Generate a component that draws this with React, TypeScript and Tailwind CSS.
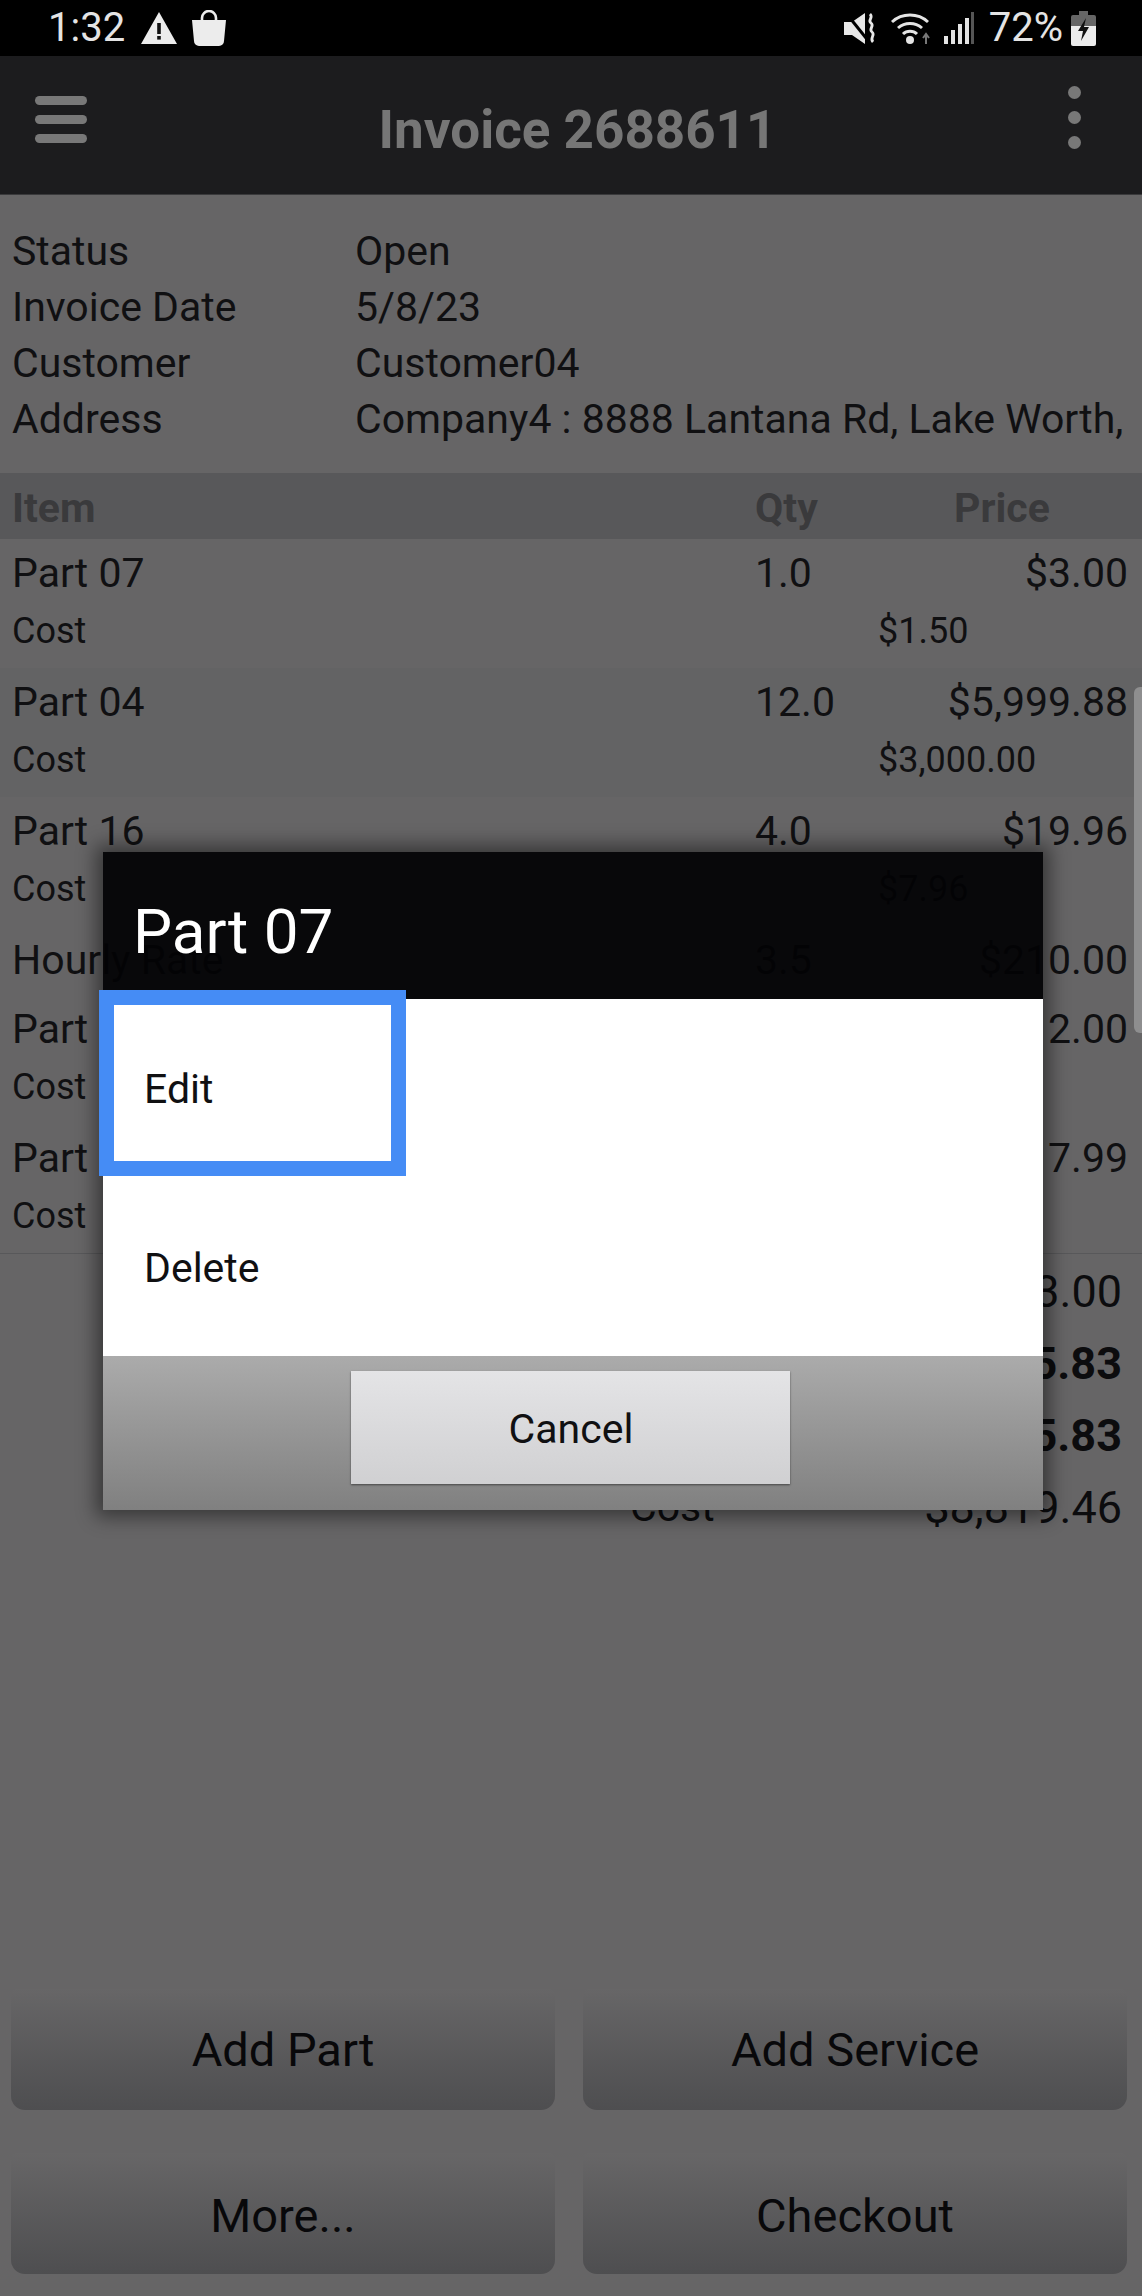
import React from 'react';

type Item = { name: string; qty: string; price: string; cost?: string };

const items: Item[] = [
  { name: 'Part 07', qty: '1.0', price: '$3.00', cost: '$1.50' },
  { name: 'Part 04', qty: '12.0', price: '$5,999.88', cost: '$3,000.00' },
  { name: 'Part 16', qty: '4.0', price: '$19.96', cost: '$7.96' },
  { name: 'Hourly Rate', qty: '3.5', price: '$210.00' },
  { name: 'Part 11', qty: '1.0', price: '$12.00', cost: '$1.00' },
  { name: 'Part 02', qty: '1.0', price: '$17.99', cost: '$3.50' },
];

const info = [
  ['Status', 'Open'],
  ['Invoice Date', '5/8/23'],
  ['Customer', 'Customer04'],
  ['Address', 'Company4 : 8888 Lantana Rd, Lake Worth,'],
];

const totals = [
  { label: 'Subtotal', value: '$6,243.00', bold: false },
  { label: 'Tax', value: '$6,245.83', bold: true },
  { label: 'Total', value: '$6,245.83', bold: true },
  { label: 'Cost', value: '$8,819.46', bold: false },
];

const StatusBar = () => (
  <div className="h-[56px] bg-black flex items-center justify-between pl-[48px] pr-[46px] text-[#e4e4e4]">
    <div className="flex items-center">
      <span className="text-[40px] leading-none mr-[15px]">1:32</span>
      <svg width="38" height="34" viewBox="0 0 38 34" className="mr-[13px]">
        <path d="M19 1 37 33H1Z" fill="#ececec" />
        <rect x="17.2" y="12" width="3.6" height="11" fill="#111" />
        <rect x="17.2" y="25" width="3.6" height="3.6" fill="#111" />
      </svg>
      <svg width="36" height="37" viewBox="0 0 36 37">
        <path d="M11 11V8a7 7 0 0 1 14 0v3" fill="none" stroke="#ececec" strokeWidth="2.6" />
        <path d="M1 10h34l-2 21a5 5 0 0 1-5 5H8a5 5 0 0 1-5-5Z" fill="#ececec" />
      </svg>
    </div>
    <div className="flex items-center">
      <svg width="32" height="31" viewBox="0 0 32 31" className="mr-[14px]">
        <path d="M0 9h8L21 0v31L8 22H0Z" fill="#e8e8e8" />
        <path d="M2 0 22 25" stroke="#000" strokeWidth="3" />
        <path d="M26 1c4 4-3 6 1 9s-3 6 1 9-3 6 1 10" fill="none" stroke="#e8e8e8" strokeWidth="2.8" />
      </svg>
      <svg width="44" height="33" viewBox="0 0 44 33" className="mr-[10px]">
        <path d="M2 10a27 27 0 0 1 36 0" fill="none" stroke="#e4e4e4" strokeWidth="3" />
        <path d="M8 16a18 18 0 0 1 24 0" fill="none" stroke="#e4e4e4" strokeWidth="3" />
        <path d="M13 22a10 10 0 0 1 14 0" fill="none" stroke="#e4e4e4" strokeWidth="3" />
        <circle cx="20" cy="28" r="4" fill="#e4e4e4" />
        <path d="M36 32V23M33 26l3-4 3 4" fill="none" stroke="#777" strokeWidth="2" />
      </svg>
      <svg width="30" height="32" viewBox="0 0 30 32" className="mr-[15px]">
        <rect x="0" y="24" width="4" height="8" fill="#e4e4e4" />
        <rect x="7" y="18" width="4" height="14" fill="#e4e4e4" />
        <rect x="14" y="12" width="4" height="20" fill="#e4e4e4" />
        <rect x="21" y="6" width="4" height="26" fill="#e4e4e4" />
        <rect x="27" y="0" width="3" height="32" fill="#555" />
      </svg>
      <span className="text-[40px] leading-none mr-[8px]">72%</span>
      <svg width="25" height="35" viewBox="0 0 25 35">
        <path d="M8 0h9v4h6a2 2 0 0 1 2 2v9H0V6a2 2 0 0 1 2-2h6Z" fill="#666" />
        <path d="M0 15h25v18a2 2 0 0 1-2 2H2a2 2 0 0 1-2-2Z" fill="#ececec" />
        <path d="M15 7 7 20h5l-2 10 8-14h-5Z" fill="#111" />
      </svg>
    </div>
  </div>
);

const TopBar = () => (
  <div className="h-[139px] bg-[#1c1c1e] border-b border-[#3a3a3c] flex items-center justify-between pl-[35px] pr-[61px]">
    <div className="flex flex-col gap-[10px] -mt-[12px]">
      <div className="w-[52px] h-[9px] rounded-full bg-[#787878]" />
      <div className="w-[52px] h-[9px] rounded-full bg-[#787878]" />
      <div className="w-[52px] h-[9px] rounded-full bg-[#787878]" />
    </div>
    <div className="text-[53px] leading-none font-bold text-[#767676] mt-[10px]">Invoice 2688611</div>
    <div className="flex flex-col gap-[12px] -mt-[15px]">
      <div className="w-[13px] h-[13px] rounded-full bg-[#787878]" />
      <div className="w-[13px] h-[13px] rounded-full bg-[#787878]" />
      <div className="w-[13px] h-[13px] rounded-full bg-[#787878]" />
    </div>
  </div>
);

const ItemRow = ({ item, shade }: { item: Item; shade: boolean }) => (
  <div className={`pl-[12px] pr-[13px] pt-[6px] ${item.cost ? 'pb-[9px]' : 'pb-[6px]'} ${shade ? 'bg-[#636364]' : ''}`}>
    <div className="flex h-[57px] items-center text-[41px] text-[#101012]">
      <div className="w-[743px]">{item.name}</div>
      <div className="w-[120px]">{item.qty}</div>
      <div className="flex-1 text-right pr-[1px]">{item.price}</div>
    </div>
    {item.cost && (
      <div className="flex h-[57px] items-center text-[36px] text-[#101012]">
        <div className="w-[866px]">Cost</div>
        <div>{item.cost}</div>
      </div>
    )}
  </div>
);

const ActionButton = ({ label, low }: { label: string; low?: boolean }) => (
  <button
    className={`h-[121px] rounded-b-[14px] rounded-t-[6px] bg-gradient-to-b from-[#676667] to-[#4e4e50] text-[47px] text-[#08080a] ${low ? 'pt-[5px]' : 'pt-[2px]'}`}
  >
    {label}
  </button>
);

const App: React.FC = () => {
  return (
    <div className="relative h-[2296px] w-[1142px] overflow-hidden bg-[#666566] flex flex-col font-['Roboto',sans-serif]">
      <StatusBar />
      <TopBar />

      {/* Invoice details */}
      <div className="pl-[12px] pr-[13px] pt-[29px] pb-[25px] text-[41px] text-[#101012]">
        {info.map(([label, value]) => (
          <div key={label} className="flex h-[56px] items-center whitespace-nowrap">
            <div className="w-[343px]">{label}</div>
            <div>{value}</div>
          </div>
        ))}
      </div>

      {/* Table */}
      <div className="h-[66px] bg-[#58585a] flex items-center pl-[12px] pr-[13px] pt-[5px] text-[41px] font-bold text-[#3a3a3c]">
        <div className="w-[743px]">Item</div>
        <div className="w-[199px]">Qty</div>
        <div>Price</div>
      </div>
      <div className="border-b border-[#58585a]">
        {items.map((item, i) => (
          <ItemRow key={item.name} item={item} shade={i === 1} />
        ))}
      </div>

      {/* Totals */}
      <div className="pt-[2px] pr-[20px]">
        {totals.map((t) => (
          <div
            key={t.label}
            className={`flex h-[72px] items-center justify-end text-[#0c0c0e] ${t.bold ? 'font-bold' : ''}`}
          >
            <div className="w-[202px] text-[41px]">{t.label}</div>
            <div className="w-[290px] text-right text-[45px]">{t.value}</div>
          </div>
        ))}
      </div>

      {/* Bottom buttons */}
      <div className="mt-auto grid grid-cols-2 gap-x-[28px] gap-y-[43px] pl-[11px] pr-[15px] pb-[22px]">
        <ActionButton label="Add Part" />
        <ActionButton label="Add Service" />
        <ActionButton label="More..." low />
        <ActionButton label="Checkout" low />
      </div>

      {/* Scrollbar */}
      <div className="absolute right-0 top-[687px] h-[346px] w-[8px] rounded-l-[6px] bg-[#8e8e8f]" />

      {/* Dialog */}
      <div className="absolute left-[103px] top-[852px] w-[940px] h-[658px] flex flex-col shadow-[0_0_18px_7px_rgba(0,0,0,0.45)]">
        <div className="h-[147px] bg-[#030305]/95 flex items-center pl-[30px] pt-[12px] text-[62px] text-white">Part 07</div>
        <div className="h-[357px] bg-white text-[41px] text-[#101012] flex flex-col">
          <div className="h-[179px] flex items-center pl-[41px] pt-[2px]">Edit</div>
          <div className="h-[178px] flex items-center pl-[41px] pt-[3px]">Delete</div>
        </div>
        <div className="flex-1 bg-gradient-to-b from-[#ababab] to-[#808080] flex justify-center pt-[15px]">
          <button className="w-[439px] h-[113px] pt-[5px] pl-[2px] bg-gradient-to-b from-[#e4e4e6] to-[#d0d0d2] shadow-[0_1px_2px_rgba(0,0,0,0.5)] text-[41px] text-[#101012] -ml-[6px]">
            Cancel
          </button>
        </div>
        {/* Focus ring on the selected option */}
        <div className="absolute left-[-4px] top-[138px] w-[307px] h-[186px] border-[15px] border-[#458cf5]" />
      </div>
    </div>
  );
};

export default App;
